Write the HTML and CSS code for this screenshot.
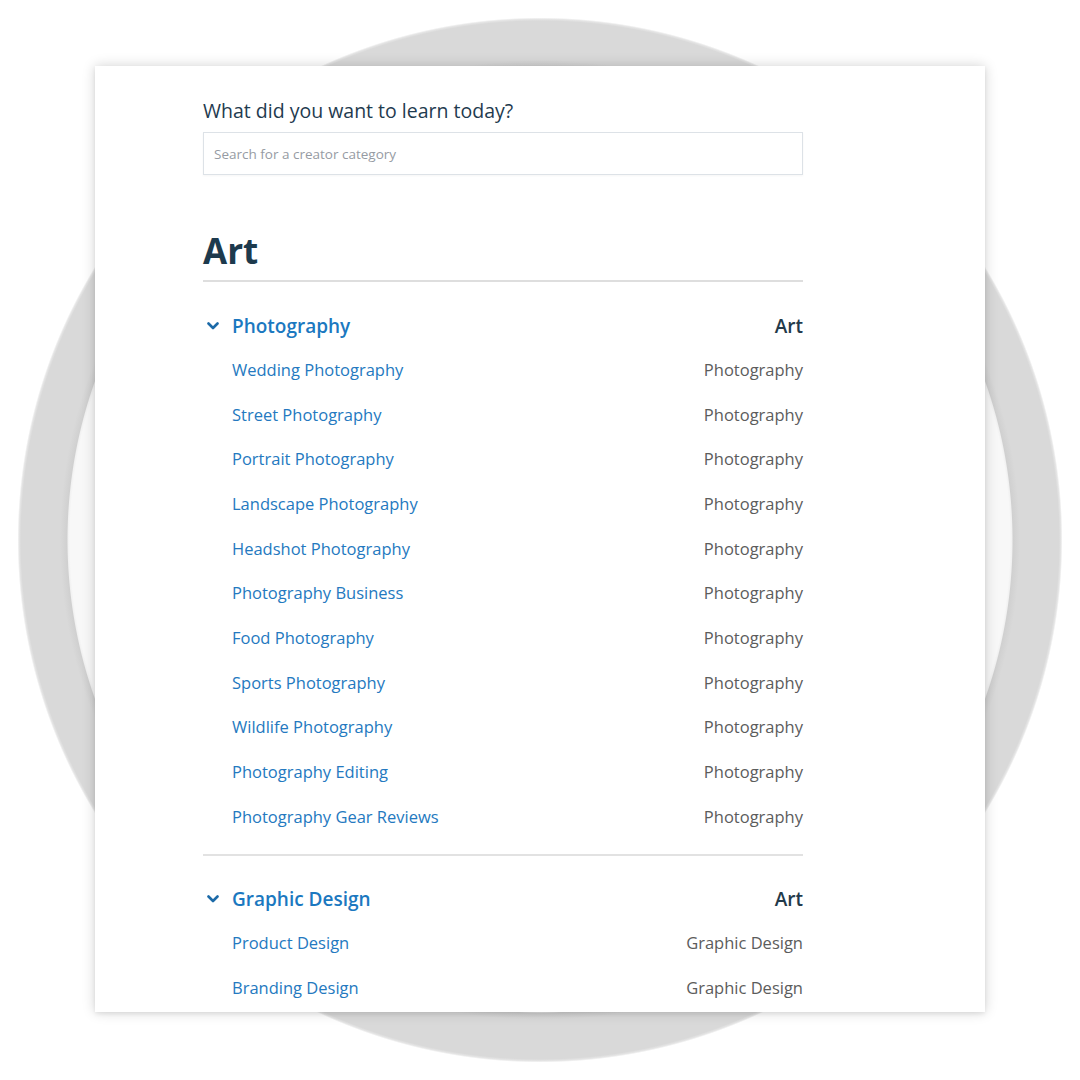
FILE: index.html
```html
<!DOCTYPE html>
<html lang="en">
<head>
<meta charset="utf-8">
<title>Creator categories</title>
<link rel="stylesheet" href="styles.css">
</head>
<body>
<main class="card">
  <h2 class="prompt">What did you want to learn today?</h2>
  <div class="search">Search for a creator category</div>

  <h1 class="section-title">Art</h1>

  <section class="group">
    <div class="row head">
      <span class="chev"><svg width="12" height="8" viewBox="0 0 12 8"><path d="M1.5 1.5 L6 6 L10.5 1.5" fill="none" stroke="currentColor" stroke-width="2.6" stroke-linecap="round" stroke-linejoin="round"/></svg></span>
      <span class="name">Photography</span>
      <span class="parent">Art</span>
    </div>
    <div class="row"><span class="name">Wedding Photography</span><span class="parent">Photography</span></div>
    <div class="row"><span class="name">Street Photography</span><span class="parent">Photography</span></div>
    <div class="row"><span class="name">Portrait Photography</span><span class="parent">Photography</span></div>
    <div class="row"><span class="name">Landscape Photography</span><span class="parent">Photography</span></div>
    <div class="row"><span class="name">Headshot Photography</span><span class="parent">Photography</span></div>
    <div class="row"><span class="name">Photography Business</span><span class="parent">Photography</span></div>
    <div class="row"><span class="name">Food Photography</span><span class="parent">Photography</span></div>
    <div class="row"><span class="name">Sports Photography</span><span class="parent">Photography</span></div>
    <div class="row"><span class="name">Wildlife Photography</span><span class="parent">Photography</span></div>
    <div class="row"><span class="name">Photography Editing</span><span class="parent">Photography</span></div>
    <div class="row"><span class="name">Photography Gear Reviews</span><span class="parent">Photography</span></div>
  </section>

  <section class="group">
    <div class="row head">
      <span class="chev"><svg width="12" height="8" viewBox="0 0 12 8"><path d="M1.5 1.5 L6 6 L10.5 1.5" fill="none" stroke="currentColor" stroke-width="2.6" stroke-linecap="round" stroke-linejoin="round"/></svg></span>
      <span class="name">Graphic Design</span>
      <span class="parent">Art</span>
    </div>
    <div class="row"><span class="name">Product Design</span><span class="parent">Graphic Design</span></div>
    <div class="row"><span class="name">Branding Design</span><span class="parent">Graphic Design</span></div>
  </section>
</main>
</body>
</html>
```

FILE: styles.css
```css
html, body {
  margin: 0;
  padding: 0;
}

body {
  width: 1080px;
  height: 1080px;
  overflow: hidden;
  font-family: "Open Sans", "Noto Sans", sans-serif;
  background:
    radial-gradient(circle at 540px 540px,
      #f8f8f8 0, #f8f8f8 470px, #f1f1f1 472px,
      #d0d0d0 473px, #d9d9d9 480px, #d9d9d9 519px,
      #e6e6e6 521px, #ffffff 522.5px);
  padding-top: 66px;
  box-sizing: border-box;
}

.card {
  width: 890px;
  height: 946px;
  margin: 0 auto;
  background: #ffffff;
  box-sizing: border-box;
  padding: 33px 182px 0 108px;
  overflow: hidden;
  box-shadow: 0 0 12px rgba(0, 0, 0, 0.18), 0 2px 4px rgba(0, 0, 0, 0.06);
}

.prompt {
  margin: 0;
  font-size: 19.5px;
  line-height: 24px;
  font-weight: 400;
  color: #1f3b4f;
}

.search {
  margin-top: 9px;
  height: 43px;
  box-sizing: border-box;
  border: 1px solid #dde2e7;
  padding: 0 10px;
  display: flex;
  align-items: center;
  font-size: 13.5px;
  color: #969ba3;
  box-shadow: 0 1px 2px rgba(0, 0, 0, 0.04);
}

.section-title {
  margin: 54px 0 0;
  font-size: 35px;
  line-height: 44px;
  font-weight: 700;
  color: #1d3a4d;
  padding-bottom: 7px;
  border-bottom: 2px solid #dedede;
}

.group {
  padding: 22px 0 15px;
  border-bottom: 2px solid #e2e2e2;
}

.group + .group {
  border-bottom: none;
}

.row {
  display: flex;
  align-items: center;
  height: 44.7px;
  padding-left: 29px;
  font-size: 16.5px;
}

.row .name {
  flex: 1;
  color: #2479c0;
}

.row .parent {
  color: #5c5c5c;
}

.row.head {
  height: 43px;
  padding-left: 0;
  font-size: 19px;
  font-weight: 600;
}

.row.head .name {
  color: #1b78c0;
}

.row.head .parent {
  color: #233a4a;
}

.chev {
  width: 29px;
  display: flex;
  align-items: center;
  padding-left: 4px;
  box-sizing: border-box;
  color: #1c6aa8;
}
```
